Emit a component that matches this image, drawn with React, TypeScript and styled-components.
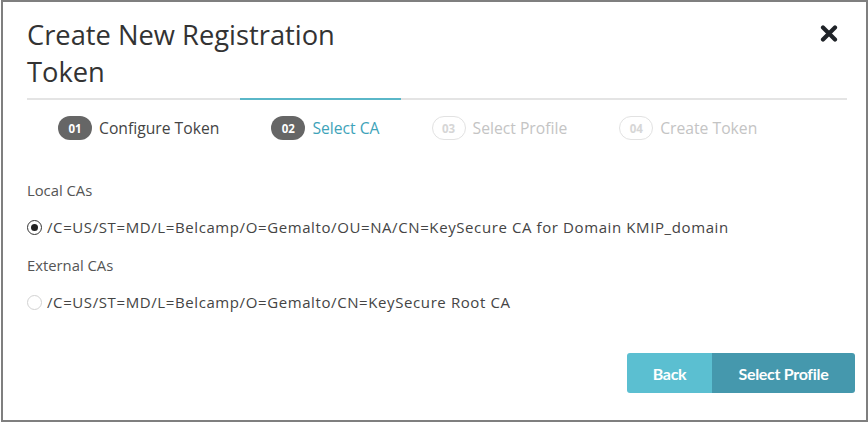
import styled, { createGlobalStyle } from "styled-components";

const GlobalStyle = createGlobalStyle`
  html, body {
    margin: 0;
    padding: 0;
    background: #ffffff;
  }
  * {
    box-sizing: border-box;
  }
`;

const Frame = styled.div`
  width: 867px;
  height: 422px;
  margin-left: 1px;
  border: 2px solid #7f7f7f;
  background: #ffffff;
  display: flex;
  flex-direction: column;
  font-family: "Open Sans", "Liberation Sans", sans-serif;
  color: #444;
`;

const Header = styled.div`
  display: flex;
  justify-content: space-between;
  align-items: flex-start;
  padding: 14px 19px 0 24px;
`;

const Title = styled.h1`
  margin: 0;
  width: 330px;
  font-size: 27.3px;
  line-height: 37px;
  font-weight: 400;
  color: #333;
`;

const CloseButton = styled.button`
  border: none;
  background: none;
  padding: 0;
  margin: 8px 8px 0 0;
  width: 20px;
  height: 18px;
  display: flex;
  align-items: center;
  justify-content: center;
  cursor: pointer;
`;

const Steps = styled.div`
  display: flex;
  margin: 8px 19px 0 24px;
`;

const StepCell = styled.div<{ $active?: boolean; $grow?: boolean }>`
  display: flex;
  align-items: center;
  padding: 16px 21px 0 31px;
  height: 42px;
  border-top: 2px solid ${(p) => (p.$active ? "#5ab7c8" : "#e4e4e4")};
  flex: ${(p) => (p.$grow ? "1" : "none")};
`;

type StepState = "done" | "active" | "todo";

const Badge = styled.span<{ $state: StepState }>`
  display: inline-flex;
  align-items: center;
  justify-content: center;
  width: 34px;
  height: 24px;
  border-radius: 12px;
  font-size: 11.5px;
  font-weight: 700;
  background: ${(p) => (p.$state === "todo" ? "#ffffff" : "#666666")};
  color: ${(p) => (p.$state === "todo" ? "#d6d6d6" : "#ffffff")};
  border: ${(p) => (p.$state === "todo" ? "1px solid #e2e2e2" : "none")};
`;

const StepLabel = styled.span<{ $state: StepState }>`
  margin-left: 7px;
  font-size: 15.7px;
  white-space: nowrap;
  color: ${(p) =>
    p.$state === "active" ? "#3ea3b9" : p.$state === "done" ? "#444444" : "#c4c4c4"};
`;

const Body = styled.div`
  padding: 40px 24px 0 24px;
  display: flex;
  flex-direction: column;
`;

const GroupLabel = styled.div`
  font-size: 14.8px;
  line-height: 20px;
  color: #555;
  margin-bottom: 17px;
`;

const Option = styled.label`
  display: flex;
  align-items: center;
  font-size: 15px;
  line-height: 20px;
  letter-spacing: 0.6px;
  color: #444;
  margin-bottom: 18px;
  white-space: nowrap;
  cursor: pointer;
`;

const Radio = styled.span<{ $checked?: boolean }>`
  width: 15px;
  height: 15px;
  border-radius: 50%;
  border: 1px solid ${(p) => (p.$checked ? "#333" : "#d2d2d2")};
  display: inline-flex;
  align-items: center;
  justify-content: center;
  margin-right: 5px;
  flex: none;

  &::after {
    content: "";
    width: 7px;
    height: 7px;
    border-radius: 50%;
    background: ${(p) => (p.$checked ? "#222" : "transparent")};
  }
`;

const Footer = styled.div`
  margin-top: auto;
  display: flex;
  justify-content: flex-end;
  padding: 0 11px 27px 0;
`;

const ButtonGroup = styled.div`
  display: flex;
  border-radius: 3px;
  overflow: hidden;
`;

const ActionButton = styled.button<{ $primary?: boolean }>`
  height: 40px;
  width: ${(p) => (p.$primary ? "143px" : "85px")};
  border: none;
  background: ${(p) => (p.$primary ? "#4598ad" : "#5bbfd1")};
  color: #ffffff;
  font-family: Lato, "Open Sans", sans-serif;
  font-weight: 700;
  font-size: 16px;
  letter-spacing: -0.3px;
  cursor: pointer;
`;

const steps: { num: string; label: string; state: StepState }[] = [
  { num: "01", label: "Configure Token", state: "done" },
  { num: "02", label: "Select CA", state: "active" },
  { num: "03", label: "Select Profile", state: "todo" },
  { num: "04", label: "Create Token", state: "todo" },
];

function CloseIcon() {
  return (
    <svg width="18" height="17" viewBox="0 0 18 17">
      <path
        d="M3 2.5 L15 14.5 M15 2.5 L3 14.5"
        stroke="#1f2328"
        strokeWidth="4.2"
        strokeLinecap="round"
      />
    </svg>
  );
}

function App() {
  return (
    <>
      <GlobalStyle />
      <Frame>
        <Header>
          <Title>Create New Registration Token</Title>
          <CloseButton aria-label="Close">
            <CloseIcon />
          </CloseButton>
        </Header>
        <Steps>
          {steps.map((step, i) => (
            <StepCell
              key={step.num}
              $active={step.state === "active"}
              $grow={i === steps.length - 1}
            >
              <Badge $state={step.state}>{step.num}</Badge>
              <StepLabel $state={step.state}>{step.label}</StepLabel>
            </StepCell>
          ))}
        </Steps>
        <Body>
          <GroupLabel>Local CAs</GroupLabel>
          <Option>
            <Radio $checked />
            /C=US/ST=MD/L=Belcamp/O=Gemalto/OU=NA/CN=KeySecure CA for Domain KMIP_domain
          </Option>
          <GroupLabel>External CAs</GroupLabel>
          <Option>
            <Radio />
            /C=US/ST=MD/L=Belcamp/O=Gemalto/CN=KeySecure Root CA
          </Option>
        </Body>
        <Footer>
          <ButtonGroup>
            <ActionButton>Back</ActionButton>
            <ActionButton $primary>Select Profile</ActionButton>
          </ButtonGroup>
        </Footer>
      </Frame>
    </>
  );
}

export default App;
